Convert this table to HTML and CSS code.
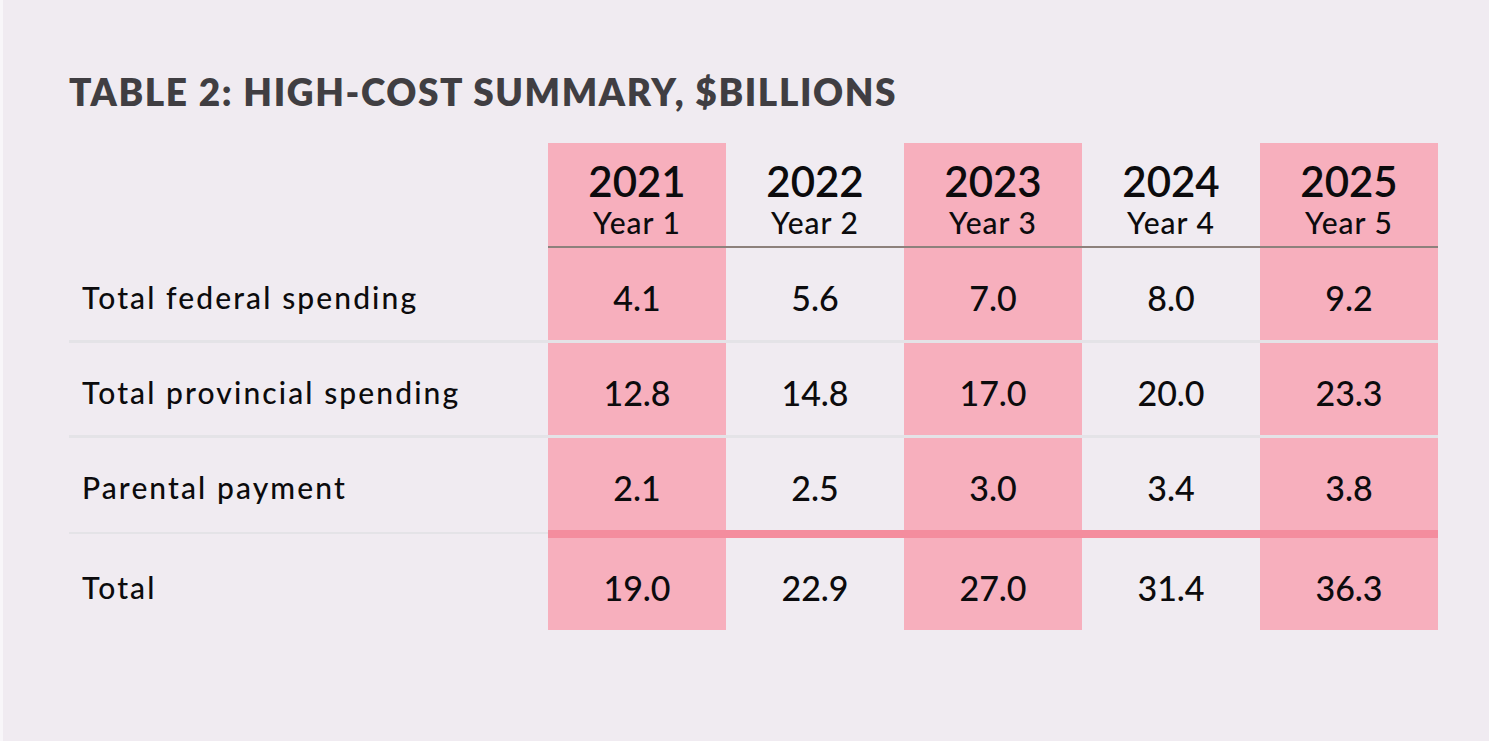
FILE: index.html
```html
<!DOCTYPE html>
<html lang="en">
<head>
<meta charset="utf-8">
<title>Table 2: High-cost summary</title>
<link rel="stylesheet" href="styles.css">
</head>
<body>
<main class="page">
  <h1 class="title">TABLE 2: HIGH-COST SUMMARY, $BILLIONS</h1>
  <div class="table">
    <div class="row head">
      <div class="cell label"></div>
      <div class="cell year pink"><span class="yr">2021</span><span class="yn">Year 1</span></div>
      <div class="cell year"><span class="yr">2022</span><span class="yn">Year 2</span></div>
      <div class="cell year pink"><span class="yr">2023</span><span class="yn">Year 3</span></div>
      <div class="cell year"><span class="yr">2024</span><span class="yn">Year 4</span></div>
      <div class="cell year pink"><span class="yr">2025</span><span class="yn">Year 5</span></div>
    </div>
    <div class="row body">
      <div class="cell label">Total federal spending</div>
      <div class="cell num pink">4.1</div>
      <div class="cell num">5.6</div>
      <div class="cell num pink">7.0</div>
      <div class="cell num">8.0</div>
      <div class="cell num pink">9.2</div>
    </div>
    <div class="sep"></div>
    <div class="row body">
      <div class="cell label">Total provincial spending</div>
      <div class="cell num pink">12.8</div>
      <div class="cell num">14.8</div>
      <div class="cell num pink">17.0</div>
      <div class="cell num">20.0</div>
      <div class="cell num pink">23.3</div>
    </div>
    <div class="sep"></div>
    <div class="row body">
      <div class="cell label">Parental payment</div>
      <div class="cell num pink">2.1</div>
      <div class="cell num">2.5</div>
      <div class="cell num pink">3.0</div>
      <div class="cell num">3.4</div>
      <div class="cell num pink">3.8</div>
    </div>
    <div class="row total-sep">
      <div class="ts-label"></div>
      <div class="ts-bar"></div>
    </div>
    <div class="row body">
      <div class="cell label">Total</div>
      <div class="cell num pink">19.0</div>
      <div class="cell num">22.9</div>
      <div class="cell num pink">27.0</div>
      <div class="cell num">31.4</div>
      <div class="cell num pink">36.3</div>
    </div>
  </div>
</main>
</body>
</html>
```

FILE: styles.css
```css
html, body {
  margin: 0;
  padding: 0;
}
body {
  background: #f0ebf1;
  width: 1489px;
  height: 741px;
  overflow: hidden;
  font-family: Lato, "Open Sans", "Liberation Sans", sans-serif;
  color: #0c0b0d;
}
.page {
  box-sizing: border-box;
  height: 741px;
  border-left: 3px solid #f8f6f9;
  padding: 70px 0 0 66px;
}
.title {
  margin: 0;
  font-size: 37px;
  line-height: 44px;
  font-weight: 800;
  color: #403e42;
  letter-spacing: 1.6px;
}
.table {
  margin-top: 29px;
  width: 1369px;
}
.row {
  display: grid;
  grid-template-columns: 479px repeat(5, 178px);
}
.cell {
  box-sizing: border-box;
}
.pink {
  background: #f7afbd;
}
.head .cell {
  height: 105px;
}
.head .year {
  border-bottom: 2px solid #8d817c;
  display: flex;
  flex-direction: column;
  align-items: center;
  padding-top: 16px;
}
.yr {
  font-size: 42px;
  line-height: 44px;
  font-weight: 600;
}
.yn {
  font-size: 30px;
  line-height: 34px;
  font-weight: 500;
  margin-top: 2px;
  letter-spacing: 1px;
}
.body .cell {
  height: 92px;
  display: flex;
  align-items: center;
  padding-top: 6px;
}
.body .label {
  padding-left: 13px;
  font-size: 30px;
  font-weight: 500;
  letter-spacing: 2.1px;
}
.body .num {
  justify-content: center;
  font-size: 34px;
  font-weight: 500;
}
.sep {
  height: 3px;
  background: #e4e3e7;
}
.total-sep {
  height: 8px;
}
.ts-label {
  margin-top: 2px;
  height: 2px;
  background: #e4e3e7;
}
.ts-bar {
  grid-column: 2 / -1;
  background: #f48d9e;
}
```
